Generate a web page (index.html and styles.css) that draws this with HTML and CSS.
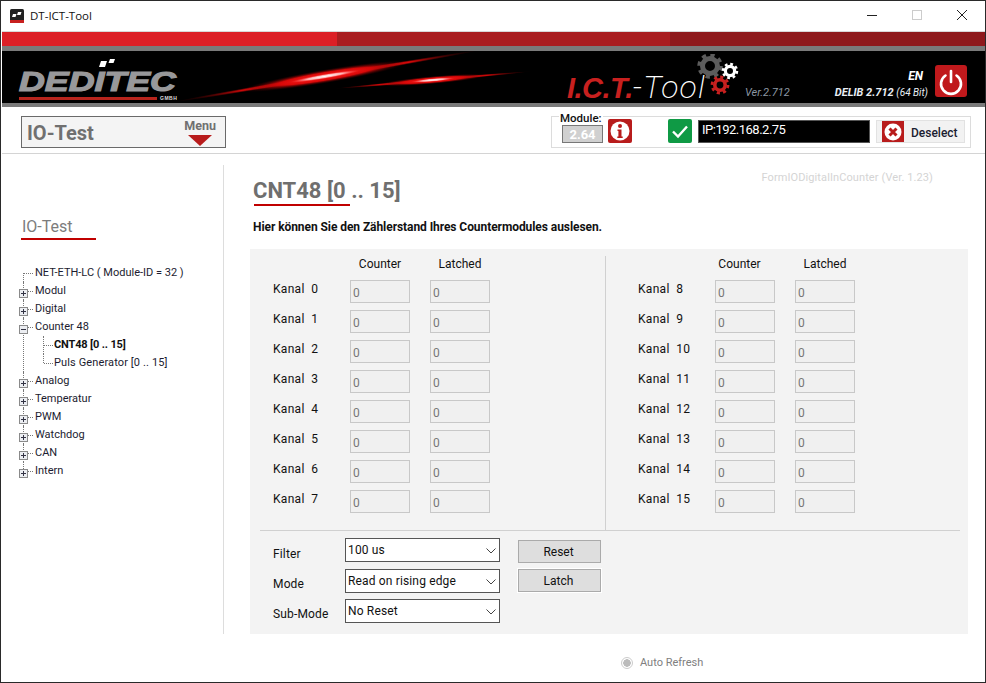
FILE: index.html
```html
<!DOCTYPE html>
<html lang="en">
<head>
    <meta charset="UTF-8">
    <title>DT-ICT-Tool</title>
    <link rel="stylesheet" href="styles.css">
</head>
<body>
    <div class="window">
        <div class="titlebar">
            <svg class="app-icon" width="14" height="14" viewBox="0 0 14 14">
                <rect width="14" height="14" rx="1.5" fill="#222"/>
                <rect y="11" width="14" height="3" fill="#c8201f"/>
                <path d="M3 5h3.5l-1 3H2zM8 3h3.5l-1 3H7z" fill="#fff"/>
            </svg>
            <span class="app-name">DT-ICT-Tool</span>
            <div class="win-controls">
                <svg width="12" height="12" viewBox="0 0 12 12"><path d="M1 6.500h10" stroke="#222"/></svg>
                <svg width="12" height="12" viewBox="0 0 12 12"><rect x="1.5" y="1.5" width="9" height="9" fill="none" stroke="#ccc"/></svg>
                <svg width="12" height="12" viewBox="0 0 12 12"><path d="M1 1l10 10M11 1L1 11" stroke="#222" fill="none"/></svg>
            </div>
        </div>

        <div class="redbar">
            <div class="redbar-a"></div>
            <div class="redbar-b"></div>
            <div class="redbar-c"></div>
        </div>

        <div class="banner">
            <div class="logo">
                <svg class="logo-dots" width="16" height="9" viewBox="0 0 16 9">
                    <path d="M2 2h6L6 8H0zM11 0h5l-1.500 4H9.500z" fill="#fff"/>
                </svg>
                <div class="logo-word">DEDITEC</div>
                <div class="logo-foot">
                    <div class="logo-bar"></div>
                    <span class="logo-gmbh">GMBH</span>
                </div>
            </div>

            <svg class="streaks" width="360" height="52" viewBox="0 0 360 52">
                <defs>
                    <radialGradient id="glow">
                        <stop offset="0" stop-color="#ff2020"/>
                        <stop offset="0.55" stop-color="#d80808"/>
                        <stop offset="1" stop-color="#300" stop-opacity="0"/>
                    </radialGradient>
                    <radialGradient id="core">
                        <stop offset="0" stop-color="#fff"/>
                        <stop offset="0.5" stop-color="#ffb0b0"/>
                        <stop offset="1" stop-color="#ff2020" stop-opacity="0"/>
                    </radialGradient>
                </defs>
                <g transform="rotate(-9.600 152 25)">
                    <ellipse cx="152" cy="25" rx="154" ry="2.500" fill="url(#glow)"/>
                    <ellipse cx="150" cy="25" rx="85" ry="7" fill="url(#glow)"/>
                    <ellipse cx="150" cy="25" rx="36" ry="2.500" fill="url(#core)"/>
                </g>
                <g transform="rotate(-5 258 29)">
                    <ellipse cx="258" cy="29" rx="98" ry="1.800" fill="url(#glow)"/>
                    <ellipse cx="258" cy="29" rx="55" ry="4" fill="url(#glow)"/>
                    <ellipse cx="258" cy="29" rx="22" ry="1.800" fill="url(#core)"/>
                </g>
            </svg>

            <div class="ict-logo">
                <span class="ict-red">I.C.T.</span><span class="ict-tool">-Tool</span>
                <svg class="gears" width="46" height="46" viewBox="0 0 46 46">
                    <g fill="none">
                        <circle cx="13" cy="12" r="11" stroke="#5c5c5c" stroke-width="3.500" stroke-dasharray="4.300 4.340"/>
                        <circle cx="13" cy="12" r="7.500" stroke="#5c5c5c" stroke-width="5"/>
                        <circle cx="33" cy="17" r="7" stroke="#fff" stroke-width="2.500" stroke-dasharray="2.750 2.750"/>
                        <circle cx="33" cy="17" r="4.600" stroke="#fff" stroke-width="3.200"/>
                        <circle cx="23" cy="31" r="8" stroke="#c8201f" stroke-width="2.800" stroke-dasharray="3.140 3.140"/>
                        <circle cx="23" cy="31" r="5.200" stroke="#c8201f" stroke-width="3.600"/>
                    </g>
                </svg>
            </div>
            <span class="ict-ver">Ver.2.712</span>

            <div class="delib">
                <div class="delib-lang">EN</div>
                <div class="delib-line"><b>DELIB 2.712</b> <small>(64 Bit)</small></div>
            </div>
            <div class="power-btn">
                <svg width="32" height="32" viewBox="0 0 32 32" fill="none" stroke="#fff" stroke-width="2.600" stroke-linecap="round">
                    <path d="M16 6v11"/>
                    <path d="M10.500 10.500a10 10 0 1 0 11 0"/>
                </svg>
            </div>
        </div>

        <div class="toolbar">
            <div class="menu-btn">
                <span class="menu-title">IO-Test</span>
                <div class="menu-drop">
                    <span class="menu-label">Menu</span>
                    <svg width="24" height="11" viewBox="0 0 24 11"><path d="M0 0h24L12 11z" fill="#b81c1c"/></svg>
                </div>
            </div>

            <div class="module-box">
                <span class="module-legend">Module:</span>
                <div class="module-ver">2.64</div>
                <div class="icon-btn icon-red">
                    <svg width="24" height="24" viewBox="0 0 24 24">
                        <circle cx="12" cy="12" r="9.500" fill="#fff"/>
                        <circle cx="12" cy="7" r="2" fill="#b81c1c"/>
                        <path d="M9.500 10.500h4v7h1.200v1.500H9.300v-1.500h1.100v-5.500h-.9z" fill="#b81c1c"/>
                    </svg>
                </div>
                <div class="icon-btn icon-green">
                    <svg width="24" height="24" viewBox="0 0 24 24">
                        <path d="M5 12.500l5 5 9-10" fill="none" stroke="#fff" stroke-width="2.400"/>
                    </svg>
                </div>
                <div class="ip-box">IP:192.168.2.75</div>
                <div class="deselect-btn">
                    <div class="deselect-icon">
                        <svg width="22" height="22" viewBox="0 0 22 22">
                            <circle cx="11" cy="11" r="8.500" fill="#fff"/>
                            <path d="M7.500 7.500l7 7M14.500 7.500l-7 7" stroke="#b81c1c" stroke-width="3"/>
                        </svg>
                    </div>
                    <span class="deselect-text">Deselect</span>
                </div>
            </div>
        </div>

        <div class="content">
            <div class="sidebar">
                <div class="side-title">IO-Test</div>
                <ul class="tree">
                    <li>NET-ETH-LC ( Module-ID = 32 )</li>
                    <li><span class="expander plus"></span>Modul</li>
                    <li><span class="expander plus"></span>Digital</li>
                    <li><span class="expander minus"></span>Counter 48
                        <ul class="subtree">
                            <li class="selected">CNT48 [0 .. 15]</li>
                            <li>Puls Generator [0 .. 15]</li>
                        </ul>
                    </li>
                    <li><span class="expander plus"></span>Analog</li>
                    <li><span class="expander plus"></span>Temperatur</li>
                    <li><span class="expander plus"></span>PWM</li>
                    <li><span class="expander plus"></span>Watchdog</li>
                    <li><span class="expander plus"></span>CAN</li>
                    <li><span class="expander plus"></span>Intern</li>
                </ul>
            </div>

            <div class="main">
                <div class="title-row">
                    <h1 class="page-title">CNT48 [0 .. 15]</h1>
                    <span class="form-ver">FormIODigitalInCounter (Ver. 1.23)</span>
                </div>
                <div class="title-rule"></div>
                <p class="page-desc">Hier können Sie den Zählerstand Ihres Countermodules auslesen.</p>

                <div class="panel">
                    <div class="channels">
                        <div class="channel-col channel-left">
                            <div class="channel-head"><span>Counter</span><span>Latched</span></div>
                            <div class="channel-row"><label>Kanal&nbsp; 0</label><input value="0" disabled><input value="0" disabled></div>
                            <div class="channel-row"><label>Kanal&nbsp; 1</label><input value="0" disabled><input value="0" disabled></div>
                            <div class="channel-row"><label>Kanal&nbsp; 2</label><input value="0" disabled><input value="0" disabled></div>
                            <div class="channel-row"><label>Kanal&nbsp; 3</label><input value="0" disabled><input value="0" disabled></div>
                            <div class="channel-row"><label>Kanal&nbsp; 4</label><input value="0" disabled><input value="0" disabled></div>
                            <div class="channel-row"><label>Kanal&nbsp; 5</label><input value="0" disabled><input value="0" disabled></div>
                            <div class="channel-row"><label>Kanal&nbsp; 6</label><input value="0" disabled><input value="0" disabled></div>
                            <div class="channel-row"><label>Kanal&nbsp; 7</label><input value="0" disabled><input value="0" disabled></div>
                        </div>
                        <div class="channel-col channel-right">
                            <div class="channel-head"><span class="head-shift">Counter</span><span>Latched</span></div>
                            <div class="channel-row"><label>Kanal&nbsp; 8</label><input value="0" disabled><input value="0" disabled></div>
                            <div class="channel-row"><label>Kanal&nbsp; 9</label><input value="0" disabled><input value="0" disabled></div>
                            <div class="channel-row"><label>Kanal&nbsp; 10</label><input value="0" disabled><input value="0" disabled></div>
                            <div class="channel-row"><label>Kanal&nbsp; 11</label><input value="0" disabled><input value="0" disabled></div>
                            <div class="channel-row"><label>Kanal&nbsp; 12</label><input value="0" disabled><input value="0" disabled></div>
                            <div class="channel-row"><label>Kanal&nbsp; 13</label><input value="0" disabled><input value="0" disabled></div>
                            <div class="channel-row"><label>Kanal&nbsp; 14</label><input value="0" disabled><input value="0" disabled></div>
                            <div class="channel-row"><label>Kanal&nbsp; 15</label><input value="0" disabled><input value="0" disabled></div>
                        </div>
                    </div>
                    <div class="panel-rule"></div>

                    <div class="settings">
                        <div class="setting-row">
                            <label class="filter-label">Filter</label>
                            <div class="select"><span>100 us</span><svg width="10" height="6" viewBox="0 0 10 6"><path d="M.5.500L5 5 9.500.500" fill="none" stroke="#444"/></svg></div>
                            <button class="act-btn reset-btn">Reset</button>
                        </div>
                        <div class="setting-row">
                            <label>Mode</label>
                            <div class="select"><span>Read on rising edge</span><svg width="10" height="6" viewBox="0 0 10 6"><path d="M.5.500L5 5 9.500.500" fill="none" stroke="#444"/></svg></div>
                            <button class="act-btn latch-btn">Latch</button>
                        </div>
                        <div class="setting-row">
                            <label>Sub-Mode</label>
                            <div class="select"><span>No Reset</span><svg width="10" height="6" viewBox="0 0 10 6"><path d="M.5.500L5 5 9.500.500" fill="none" stroke="#444"/></svg></div>
                        </div>
                    </div>
                </div>

                <div class="auto-refresh">
                    <span class="radio"></span>
                    <span>Auto Refresh</span>
                </div>
            </div>
        </div>
    </div>
</body>
</html>
```

FILE: styles.css
```css
* {
    box-sizing: border-box;
}

html, body {
    margin: 0;
    padding: 0;
    background: #fff;
}

body {
    font-family: 'Roboto', sans-serif;
    font-size: 12px;
    color: #111;
}

.window {
    width: 986px;
    height: 683px;
    border: 1px solid #2a2a2a;
    overflow: hidden;
}

/* title bar */
.titlebar {
    height: 30px;
    display: flex;
    align-items: center;
    padding-left: 9px;
}

.app-icon {
    margin-top: -1px;
}

.app-name {
    margin-left: 6px;
    font-family: 'Open Sans', sans-serif;
    font-size: 11.500px;
    margin-top: -1px;
}

.win-controls {
    margin-left: auto;
    display: flex;
    gap: 33px;
    padding-right: 17px;
    margin-top: -2px;
}

/* red strip and black banner */
.redbar {
    height: 20px;
    margin-left: 1px;
    display: flex;
    border-top: 1px solid #d8d8d8;
    border-bottom: 5px solid #7a7a7a;
}

.redbar-a { width: 335px; background: #dc1f26; }
.redbar-b { width: 333px; background: #a91d20; }
.redbar-c { flex: 1; background: #8e191c; }

.banner {
    height: 56px;
    margin-left: 1px;
    background: #000;
    border-bottom: 4px solid #7a7a7a;
    display: flex;
    padding-left: 17px;
}

.logo {
    width: 156px;
    height: 52px;
    padding-top: 20px;
    position: relative;
}

.logo-dots {
    position: absolute;
    left: 80px;
    top: 8px;
}

.logo-word {
    font-family: 'Liberation Sans', sans-serif;
    font-size: 27.500px;
    font-weight: bold;
    font-style: italic;
    line-height: 21px;
    color: #98989a;
    -webkit-text-stroke: 1.2px #98989a;
    transform: scaleX(1.3);
    transform-origin: left center;
    white-space: nowrap;
}

.logo-foot {
    display: flex;
    align-items: center;
    margin-top: 3px;
}

.logo-bar {
    width: 138px;
    height: 3px;
    background: #b8241c;
    flex: none;
}

.logo-gmbh {
    flex: none;
    margin-left: 3px;
    font-family: 'Liberation Sans', sans-serif;
    font-size: 5px;
    font-weight: bold;
    letter-spacing: 0.5px;
    color: #ddd;
}

.streaks {
    flex: none;
}

.ict-logo {
    position: relative;
    margin-left: 32px;
    height: 52px;
    padding-top: 21px;
    white-space: nowrap;
    line-height: 30px;
    width: 178px;
    flex: none;
}

.ict-red {
    font-family: 'Liberation Sans', sans-serif;
    font-size: 29px;
    font-weight: bold;
    font-style: italic;
    letter-spacing: -0.5px;
    color: #c8201f;
}

.ict-tool {
    font-family: 'Roboto', sans-serif;
    font-size: 32px;
    font-weight: 200;
    font-style: italic;
    letter-spacing: 1.2px;
    color: #fff;
}

.gears {
    position: absolute;
    left: 130px;
    top: 3px;
}

.ict-ver {
    flex: none;
    font-size: 11px;
    font-style: italic;
    color: #8b97a3;
    margin-top: 35px;
    line-height: 14px;
    height: 14px;
}

.delib {
    margin-left: auto;
    padding-top: 18px;
    text-align: right;
    color: #e8eef4;
    font-style: italic;
}

.delib-lang {
    font-weight: bold;
    font-size: 12px;
    line-height: 14px;
    padding-right: 5px;
    color: #fff;
}

.delib-line {
    margin-top: 3px;
    line-height: 14px;
    font-size: 11px;
}

.delib-line small {
    font-size: 10px;
}

.power-btn {
    width: 32px;
    height: 32px;
    margin: 14px 18px 0 7px;
    background: #c0191c;
    border-radius: 3px;
}

/* toolbar under the banner */
.toolbar {
    height: 47px;
    margin-left: 1px;
    border-bottom: 1px solid #d4d4d4;
    display: flex;
    position: relative;
}

.menu-btn {
    width: 205px;
    height: 32px;
    margin: 9px 0 0 19px;
    border: 1px solid #6a6a6a;
    background: #f4f4f4;
    display: flex;
    justify-content: space-between;
    padding: 0 9px 0 5px;
}

.menu-title {
    font-size: 20px;
    font-weight: bold;
    line-height: 33px;
    color: #707070;
}

.menu-drop {
    display: flex;
    flex-direction: column;
    align-items: center;
    padding-top: 2px;
}

.menu-label {
    font-size: 12.500px;
    font-weight: bold;
    color: #707070;
    line-height: 14px;
    margin-bottom: 2px;
}

.module-box {
    position: relative;
    width: 420px;
    height: 32px;
    margin: 9px 0 0 325px;
    border: 1px solid #dcdcdc;
    display: flex;
    padding: 2px 0 0 10px;
}

.module-legend {
    position: absolute;
    left: 7px;
    top: -6px;
    padding: 0 1px;
    background: #fff;
    font-size: 11.500px;
    font-weight: 500;
    line-height: 14px;
}

.module-ver {
    width: 41px;
    height: 18px;
    margin-top: 6px;
    background: #d0d0d0;
    border: 1px solid #777;
    color: #fff;
    font-size: 13px;
    font-weight: bold;
    line-height: 17px;
    text-align: center;
}

.icon-btn {
    width: 24px;
    height: 24px;
    border-radius: 2px;
    flex: none;
}

.icon-red {
    background: #b81c1c;
    margin-left: 5px;
}

.icon-green {
    background: #0f9a45;
    margin-left: 36px;
}

.ip-box {
    width: 172px;
    height: 23px;
    margin: 1px 0 0 6px;
    background: #000;
    border: 1px solid #555;
    color: #fff;
    font-size: 13px;
    letter-spacing: -0.5px;
    line-height: 18px;
    padding-left: 3px;
}

.deselect-btn {
    width: 89px;
    height: 23px;
    margin: 1px 0 0 6px;
    background: #f2f2f2;
    border: 1px solid #e2e2e2;
    display: flex;
    align-items: center;
    padding-left: 5px;
    font-weight: 500;
    font-size: 12px;
    color: #1a2030;
}

.deselect-icon {
    width: 22px;
    height: 21px;
    background: #b81c1c;
    margin-right: 7px;
    overflow: hidden;
}

.deselect-text {
    padding-top: 3px;
}

/* sidebar with tree */
.content {
    display: flex;
    height: 529px;
}

.sidebar {
    width: 223px;
    height: 469px;
    margin-top: 11px;
    border-right: 1px solid #ddd;
    padding: 51px 0 0 20px;
    flex: none;
}

.side-title {
    width: 75px;
    height: 24px;
    font-size: 16px;
    line-height: 22px;
    color: #7c7c7c;
    border-bottom: 2px solid #c00000;
    padding-left: 1px;
}

.tree, .subtree {
    list-style: none;
    margin: 0;
    padding: 0;
}

.tree {
    margin-top: 24px;
    font-size: 11px;
    line-height: 18px;
    color: #1c1c30;
}

.tree li {
    position: relative;
    padding-left: 14px;
}

.tree li::before {
    content: "";
    position: absolute;
    left: 2px;
    top: 0;
    bottom: 0;
    border-left: 1px dotted #777;
}

.tree li::after {
    content: "";
    position: absolute;
    left: 3px;
    top: 9px;
    width: 9px;
    border-top: 1px dotted #777;
}

.tree > li:first-child::before {
    top: 9px;
}

.tree > li:last-child::before {
    bottom: auto;
    height: 9px;
}

.subtree {
    margin-left: -14px;
}

.subtree li {
    padding-left: 33px;
    letter-spacing: 0.12px;
}

.subtree li::before {
    left: 22px;
}

.subtree li::after {
    left: 23px;
}

.subtree li:last-child::before {
    bottom: auto;
    height: 9px;
}

.subtree .selected {
    font-weight: bold;
    letter-spacing: -0.15px;
    color: #111;
}

.expander {
    position: absolute;
    z-index: 1;
    left: -2px;
    top: 7px;
    width: 9px;
    height: 9px;
    border: 1px solid #8a8a8a;
    background: #eceef2;
}

.minus {
    background: linear-gradient(#334, #334) center / 5px 1px no-repeat, #eceef2;
}

.plus {
    background: linear-gradient(#334, #334) center / 5px 1px no-repeat,
                linear-gradient(#334, #334) center / 1px 5px no-repeat, #eceef2;
}

/* main area */
.main {
    margin-left: 26px;
    width: 718px;
    flex: none;
}

.title-row {
    display: flex;
    justify-content: space-between;
    margin-top: 24px;
    padding-left: 3px;
}

.page-title {
    margin: 0;
    font-size: 22px;
    font-weight: bold;
    line-height: 26px;
    color: #6f6f6f;
}

.form-ver {
    margin: -7px 35px 0 0;
    font-size: 11px;
    letter-spacing: 0.1px;
    line-height: 14px;
    color: #d4d4d4;
}

.title-rule {
    width: 96px;
    height: 2px;
    margin-left: 4px;
    background: #c00000;
}

.page-desc {
    margin: 13px 0 14px 3px;
    font-size: 12px;
    font-weight: bold;
    letter-spacing: -0.07px;
    line-height: 16px;
    color: #111;
}

.panel {
    background: #f3f3f3;
    height: 385px;
    padding-top: 7px;
}

.channels {
    display: flex;
    height: 274px;
}

.channel-col {
    width: 356px;
}

.channel-left {
    padding-left: 23px;
    border-right: 1px solid #d0d0d0;
}

.channel-right {
    padding-left: 32px;
}

.channel-head {
    display: flex;
    margin: 0 0 8px 77px;
    gap: 20px;
    line-height: 16px;
}

.channel-head span {
    width: 60px;
    text-align: center;
}

.channel-head .head-shift {
    padding-right: 11px;
}

.channel-row {
    display: flex;
    gap: 20px;
    height: 23px;
    margin-bottom: 7px;
}

.channel-row label {
    width: 57px;
    line-height: 18px;
    letter-spacing: 0.3px;
    white-space: nowrap;
}

.channel-row input {
    width: 60px;
    height: 23px;
    border: 1px solid #c8c8c8;
    background: #f0f0f0;
    padding: 2px 0 0 2px;
    font-family: inherit;
    font-size: 12px;
    color: #777;
}

.panel-rule {
    height: 1px;
    margin: 0 8px 0 10px;
    background: #d0d0d0;
}

.settings {
    padding: 7px 0 0 23px;
}

.setting-row {
    display: flex;
    height: 24px;
    margin-bottom: 6px;
}

.setting-row:first-child {
    margin-bottom: 7px;
}

.setting-row label {
    width: 72px;
    padding-top: 6px;
    line-height: 18px;
    letter-spacing: 0.15px;
}

.setting-row .filter-label {
    padding-top: 7px;
}

.select {
    width: 155px;
    height: 24px;
    border: 1px solid #555;
    background: #fff;
    display: flex;
    justify-content: space-between;
    align-items: center;
    padding: 0 3px 1px 2px;
    letter-spacing: 0.15px;
}

.select svg {
    margin: 2px 0 0;
}

.act-btn {
    width: 83px;
    height: 23px;
    margin-left: 18px;
    background: #dedede;
    border: 1px solid #aaa;
    font-family: inherit;
    font-size: 12px;
    color: #111;
    padding: 0 2px 0 0;
}

.reset-btn {
    margin-top: 2px;
}

.latch-btn {
    box-shadow: 0 0 0 1px #fff;
}

.auto-refresh {
    display: flex;
    align-items: center;
    gap: 7px;
    margin: 22px 0 0 371px;
    color: #808080;
    font-size: 11px;
    line-height: 14px;
}

.radio {
    width: 12px;
    height: 12px;
    border: 1px solid #ccc;
    border-radius: 50%;
    background: radial-gradient(circle, #bbb 0 3.500px, #fff 4px);
}
```
